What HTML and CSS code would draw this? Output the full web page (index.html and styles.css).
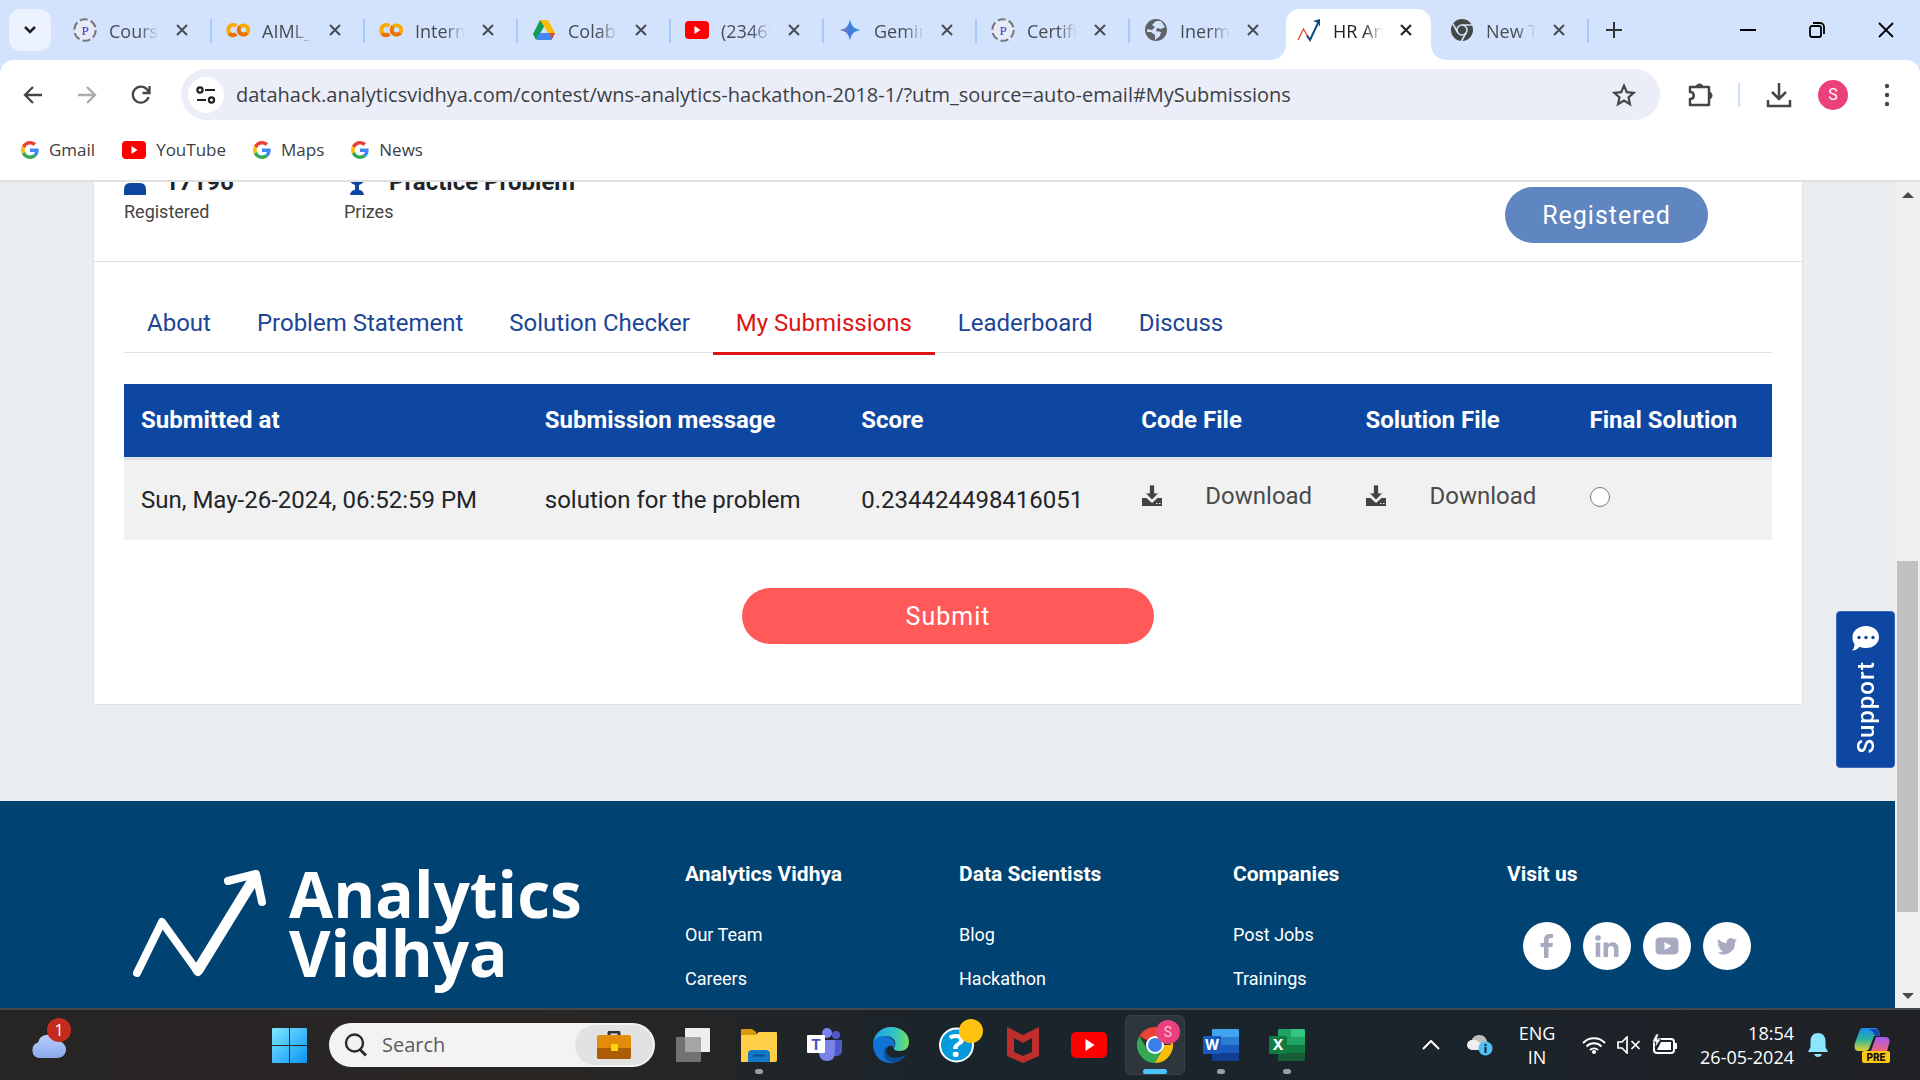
FILE: index.html
```html
<!DOCTYPE html>
<html lang="en">
<head>
<meta charset="utf-8">
<meta name="viewport" content="width=device-width, initial-scale=1">
<title>HR Analytics</title>
<link rel="stylesheet" href="styles.css">
</head>
<body>
<svg class="sprite" aria-hidden="true">
  <symbol id="x" viewBox="0 0 14 14"><path d="M2 2l10 10M12 2L2 12" stroke="currentColor" stroke-width="2" fill="none"/></symbol>
  <symbol id="google" viewBox="0 0 48 48"><path fill="#EA4335" d="M24 9.5c3.54 0 6.71 1.22 9.21 3.6l6.85-6.85C35.9 2.38 30.47 0 24 0 14.62 0 6.51 5.38 2.56 13.22l7.98 6.19C12.43 13.72 17.74 9.5 24 9.5z"/><path fill="#4285F4" d="M46.98 24.55c0-1.57-.15-3.09-.38-4.55H24v9.02h12.94c-.58 2.96-2.26 5.48-4.78 7.18l7.73 6c4.51-4.18 7.09-10.36 7.09-17.65z"/><path fill="#FBBC05" d="M10.53 28.59c-.48-1.45-.76-2.99-.76-4.59s.27-3.14.76-4.59l-7.98-6.19C.92 16.46 0 20.12 0 24c0 3.88.92 7.54 2.56 10.78l7.97-6.19z"/><path fill="#34A853" d="M24 48c6.48 0 11.93-2.13 15.89-5.81l-7.73-6c-2.15 1.45-4.92 2.3-8.16 2.3-6.26 0-11.57-4.22-13.47-9.91l-7.98 6.19C6.51 42.62 14.62 48 24 48z"/></symbol>
  <symbol id="youtube" viewBox="0 0 24 18"><rect y="0" width="24" height="18" rx="4" fill="#f00"/><path d="M9.500 5l6 4-6 4z" fill="#fff"/></symbol>
  <symbol id="colab" viewBox="0 0 24 24"><path d="M10.200 8A5 5 0 1 0 10.200 16" fill="none" stroke="#f9ab00" stroke-width="4"/><circle cx="17.500" cy="12" r="4.700" fill="none" stroke="#f9ab00" stroke-width="3.800"/><path d="M3 15.500a5 5 0 0 0 7.200.5M14 8.500a4.700 4.700 0 0 0 7 6.500" fill="none" stroke="#e8710a" stroke-width="4"/></symbol>
  <symbol id="placement" viewBox="0 0 24 24"><circle cx="12" cy="12" r="10.700" fill="#e8ebf5" stroke="#74797f" stroke-width="2" stroke-dasharray="8 3.200"/><text x="12" y="16.500" text-anchor="middle" font-family="Liberation Serif, serif" font-size="13" fill="#4030d0">P</text></symbol>
  <symbol id="tray" viewBox="0 0 22 22"><path d="M8.500 0h5v8h4L11 15 4.500 8h4z" fill="#444"/><path d="M1 13h4.500l5.500 5 5.500-5H21v8H1z" fill="#444"/><path d="M8.500 0h5v8h4L11 15 4.500 8h4z" fill="#444" stroke="#f1f1f1" stroke-width=".8"/><path d="M15 18.500h1.500M18 18.500h1.500" stroke="#f1f1f1"/></symbol>
</svg>

<header class="browser">
  <div class="tabstrip">
    <button class="tab-search" aria-label="Search tabs"><svg width="14" height="10" viewBox="0 0 14 10"><path d="M2 2l5 5 5-5" fill="none" stroke="#1f1f1f" stroke-width="2.500"/></svg></button>
    <nav class="tabs" aria-label="Open tabs">
      <div class="tab"><svg class="fav"><use href="#placement"/></svg><span class="tab-title">Course</span><button class="close" aria-label="Close"><svg><use href="#x"/></svg></button></div>
      <div class="tab"><svg class="fav"><use href="#colab"/></svg><span class="tab-title">AIML_P</span><button class="close" aria-label="Close"><svg><use href="#x"/></svg></button></div>
      <div class="tab"><svg class="fav"><use href="#colab"/></svg><span class="tab-title">Interns</span><button class="close" aria-label="Close"><svg><use href="#x"/></svg></button></div>
      <div class="tab"><svg class="fav" viewBox="0 0 24 24"><path d="M8 2h8l-8 13.500L4 22l-3-6z" fill="#0f9d58"/><path d="M8 2h8l7 13h-7z" fill="#fbbc04"/><path d="M7 15h16l-3.500 7h-15z" fill="#4285f4"/><path d="M18 15h5l-3.500 7z" fill="#ea4335"/></svg><span class="tab-title">Colab</span><button class="close" aria-label="Close"><svg><use href="#x"/></svg></button></div>
      <div class="tab"><svg class="fav"><use href="#youtube"/></svg><span class="tab-title">(2346)</span><button class="close" aria-label="Close"><svg><use href="#x"/></svg></button></div>
      <div class="tab"><svg class="fav" viewBox="0 0 24 24"><defs><linearGradient id="gem" x2="1"><stop stop-color="#9a7cb8"/><stop offset=".5" stop-color="#3d7bdc"/><stop offset="1" stop-color="#2ba0cf"/></linearGradient></defs><path d="M12 1c1 7 4 10 11 11-7 1-10 4-11 11-1-7-4-10-11-11 7-1 10-4 11-11z" fill="url(#gem)"/></svg><span class="tab-title">Gemini</span><button class="close" aria-label="Close"><svg><use href="#x"/></svg></button></div>
      <div class="tab"><svg class="fav"><use href="#placement"/></svg><span class="tab-title">Certific</span><button class="close" aria-label="Close"><svg><use href="#x"/></svg></button></div>
      <div class="tab last-before"><svg class="fav" viewBox="0 0 24 24"><circle cx="12" cy="12" r="11" fill="#5f6368"/><path d="M12 3l5 0 4 6-4 2-4-1-1 3 5 1-1 4-5 4v-5l-4-3H3c0-1 0-2 .5-3L8 12l3-3-3-2z" fill="#d3e3fd"/></svg><span class="tab-title">Inermo</span><button class="close" aria-label="Close"><svg><use href="#x"/></svg></button></div>
      <div class="tab active"><svg class="fav" viewBox="0 0 24 24"><path d="M1 22L6.500 11l4.500 8" fill="none" stroke="#e8593a" stroke-width="1.500"/><path d="M10 17.500l3 4.500L22 3" fill="none" stroke="#0b4a7c" stroke-width="2"/><path d="M16 3l7-2v8l-2-4z" fill="#0b4a7c"/></svg><span class="tab-title">HR Ana</span><button class="close" aria-label="Close"><svg><use href="#x"/></svg></button></div>
      <div class="tab"><svg class="fav" viewBox="0 0 24 24"><circle cx="12" cy="12" r="11" fill="#444746"/><g fill="none" stroke="#d3e3fd" stroke-width="1.600"><circle cx="12" cy="12" r="5"/><path d="M12 7h10M7.700 14.500L3 6M16.300 14.500L11.500 23"/></g></svg><span class="tab-title">New Ta</span><button class="close" aria-label="Close"><svg><use href="#x"/></svg></button></div>
    </nav>
    <button class="new-tab" aria-label="New tab"><svg width="18" height="18" viewBox="0 0 18 18"><path d="M9 1v16M1 9h16" stroke="#333" stroke-width="2"/></svg></button>
    <div class="window-controls">
      <button aria-label="Minimize"><svg viewBox="0 0 16 16"><path d="M0 8h16" stroke="#000" stroke-width="2"/></svg></button>
      <button aria-label="Restore"><svg viewBox="0 0 16 16"><g fill="none" stroke="#000" stroke-width="1.800"><rect x="1" y="4" width="11" height="11" rx="2"/><path d="M4 1h7a4 4 0 0 1 4 4v7"/></g></svg></button>
      <button aria-label="Close window"><svg viewBox="0 0 16 16"><path d="M1 1l14 14M15 1L1 15" stroke="#000" stroke-width="1.800"/></svg></button>
    </div>
  </div>

  <div class="toolbar">
    <div class="nav-buttons">
      <button aria-label="Back"><svg viewBox="0 0 20 20"><path d="M19 10H2.500M10 2l-8 8 8 8" fill="none" stroke="#444746" stroke-width="2.300"/></svg></button>
      <button aria-label="Forward"><svg viewBox="0 0 20 20"><path d="M1 10h16.500M10 2l8 8-8 8" fill="none" stroke="#aaa" stroke-width="2.300"/></svg></button>
      <button aria-label="Reload"><svg viewBox="0 0 20 20"><path d="M17.500 12A8 8 0 1 1 16 4.500l2 2.500M18.500 1v7h-7" fill="none" stroke="#444746" stroke-width="2.300"/></svg></button>
    </div>
    <div class="omnibox">
      <button class="site-info" aria-label="Site information"><svg width="20" height="18" viewBox="0 0 20 18"><g fill="none" stroke="#1f1f1f" stroke-width="2.200"><circle cx="4" cy="4" r="2.600"/><path d="M9 4h10M1 14h9"/><circle cx="15.500" cy="14" r="2.600"/></g></svg></button>
      <input type="text" aria-label="Address" value="datahack.analyticsvidhya.com/contest/wns-analytics-hackathon-2018-1/?utm_source=auto-email#MySubmissions">
      <button class="star" aria-label="Bookmark"><svg width="24" height="24" viewBox="0 0 24 24"><path d="M12 2.800l2.800 6.300 6.900.7-5.200 4.600 1.500 6.800-6-3.600-6 3.600 1.500-6.800-5.200-4.600 6.900-.7z" fill="none" stroke="#444746" stroke-width="2.200"/></svg></button>
    </div>
    <div class="actions">
      <button aria-label="Extensions"><svg width="26" height="26" viewBox="0 0 26 26"><path d="M2 5h19v18H2v-6c5 0 5-7 0-7z" fill="none" stroke="#444746" stroke-width="2.500" stroke-linejoin="round"/><path d="M8 4a4 4 0 0 1 7 0M22 10a4 4 0 0 1 0 7" fill="#444746" stroke="#444746"/></svg></button>
      <span class="separator"></span>
      <button aria-label="Downloads"><svg width="26" height="26" viewBox="0 0 26 26"><path d="M13 1v15M6 10l7 7 7-7M2 18v6h22v-6" fill="none" stroke="#444746" stroke-width="2.500"/></svg></button>
      <button class="avatar" aria-label="Profile">S</button>
      <button aria-label="Menu"><svg width="6" height="24" viewBox="0 0 6 24"><g fill="#444746"><circle cx="3" cy="3" r="2.200"/><circle cx="3" cy="12" r="2.200"/><circle cx="3" cy="21" r="2.200"/></g></svg></button>
    </div>
  </div>

  <nav class="bookmarks" aria-label="Bookmarks">
    <a href="#"><svg width="18" height="18"><use href="#google"/></svg>Gmail</a>
    <a href="#"><svg width="24" height="18"><use href="#youtube"/></svg>YouTube</a>
    <a href="#"><svg width="18" height="18"><use href="#google"/></svg>Maps</a>
    <a href="#"><svg width="18" height="18"><use href="#google"/></svg>News</a>
  </nav>
</header>

<div class="viewport">
  <div class="site">
    <main class="card">
      <section class="summary">
        <dl class="stat"><dd><svg width="22" height="26" viewBox="0 0 22 26"><circle cx="11" cy="7" r="6" fill="#0d47a1"/><path d="M0 26v-5q0-7 6-7h10q6 0 6 7v5z" fill="#0d47a1"/></svg>17196</dd><dt>Registered</dt></dl>
        <dl class="stat"><dd><svg width="26" height="26" viewBox="0 0 26 26"><path d="M5 0h16v8q0 6-6 8v5q4 0 5 5H6q1-5 5-5v-5q-6-2-6-8z" fill="#0d47a1"/></svg>Practice Problem</dd><dt>Prizes</dt></dl>
        <button class="pill registered">Registered</button>
      </section>
      <section class="content">
        <nav class="page-tabs" aria-label="Contest">
          <a href="#">About</a><a href="#">Problem Statement</a><a href="#">Solution Checker</a><a href="#" class="current">My Submissions</a><a href="#">Leaderboard</a><a href="#">Discuss</a>
        </nav>
        <table class="submissions">
          <thead><tr><th>Submitted at</th><th>Submission message</th><th>Score</th><th>Code File</th><th>Solution File</th><th>Final Solution</th></tr></thead>
          <tbody><tr>
            <td>Sun, May-26-2024, 06:52:59 PM</td><td>solution for the problem</td><td>0.234424498416051</td>
            <td class="file"><a href="#"><svg width="22" height="22"><use href="#tray"/></svg>Download</a></td>
            <td class="file"><a href="#"><svg width="22" height="22"><use href="#tray"/></svg>Download</a></td>
            <td class="file"><input type="radio" name="final" aria-label="Final Solution"></td>
          </tr></tbody>
        </table>
        <button class="pill submit">Submit</button>
      </section>
    </main>
    <footer class="footer">
      <a class="brand" href="#">
        <svg width="134" height="108" viewBox="0 0 134 108"><g fill="none" stroke="#fff" stroke-linecap="round" stroke-linejoin="round"><path d="M4 104L29 53l36 50" stroke-width="8"/><path d="M65 101L122 8" stroke-width="11"/><path d="M95 12l28-7 6 28" stroke-width="8"/></g></svg>
        <span>Analytics<br>Vidhya</span>
      </a>
      <div class="links"><h3>Analytics Vidhya</h3><a href="#">Our Team</a><a href="#">Careers</a></div>
      <div class="links"><h3>Data Scientists</h3><a href="#">Blog</a><a href="#">Hackathon</a></div>
      <div class="links"><h3>Companies</h3><a href="#">Post Jobs</a><a href="#">Trainings</a></div>
      <div class="links"><h3>Visit us</h3>
        <div class="social">
          <a href="#" aria-label="Facebook"><svg viewBox="0 0 24 24"><path d="M9 24V13H5.500V9H9V6c0-4 2-6 5.500-6H18v4h-2.500C14 4 13.500 4.800 13.500 6v3H18l-.6 4h-3.900v11z"/></svg></a>
          <a href="#" aria-label="LinkedIn"><svg viewBox="0 0 24 24"><circle cx="3" cy="4" r="2.800"/><path d="M.7 8.500h4.600V23H.7zM8.500 8.500H13v2c2.500-4 10.500-3 10.500 4V23H19v-8c0-4-6-4-6 0v8H8.500z"/></svg></a>
          <a href="#" aria-label="YouTube"><svg viewBox="0 0 24 24"><path fill-rule="evenodd" d="M5 3.500h14q4.500 0 4.500 5v7q0 5-4.500 5H5q-4.500 0-4.500-5v-7q0-5 4.500-5zM9.500 8v8l7-4z"/></svg></a>
          <a href="#" aria-label="Twitter"><svg viewBox="0 0 24 24"><path d="M22 6c-.8.400-1.500.6-2.400.7.900-.5 1.500-1.300 1.800-2.300-.8.500-1.700.8-2.600 1a4.100 4.100 0 0 0-7 3.700C8.400 9 5.400 7.400 3.400 4.900a4.100 4.100 0 0 0 1.300 5.500c-.7 0-1.300-.2-1.900-.5 0 2 1.400 3.700 3.300 4.100-.6.200-1.200.2-1.800.1.500 1.600 2 2.800 3.800 2.800A8.200 8.200 0 0 1 2 18.600 11.600 11.600 0 0 0 20 8.300c.800-.6 1.500-1.300 2-2.300z"/></svg></a>
        </div>
      </div>
    </footer>
  </div>
  <button class="support"><svg width="28" height="25" viewBox="0 0 28 25"><path d="M14 0c8 0 13 5 13 11s-5 11-13 11c-2.500 0-4.500-.4-6.500-1.200C6 23 3.500 24.500 0 24.500c2-2 2.500-4 2.500-6.500C1 16 .5 14 .5 11 .5 5 6 0 14 0z" fill="#fff"/><g fill="#0d47a1"><circle cx="7" cy="11.500" r="1.700"/><circle cx="14" cy="11.500" r="1.700"/><circle cx="21" cy="11.500" r="1.700"/></g></svg><span>Support</span></button>
  <div class="scrollbar" aria-hidden="true">
    <svg width="12" height="6" viewBox="0 0 12 6"><path d="M0 6l6-6 6 6z" fill="#4a4a4a"/></svg>
    <span class="track"><span class="thumb"></span></span>
    <svg width="12" height="6" viewBox="0 0 12 6"><path d="M0 0l6 6 6-6z" fill="#4a4a4a"/></svg>
  </div>
</div>

<footer class="taskbar">
  <button class="weather" aria-label="Weather"><svg width="36" height="26" viewBox="0 0 36 26"><defs><linearGradient id="cl" y2="1" x2="0"><stop stop-color="#b9cffc"/><stop offset="1" stop-color="#8ba9ea"/></linearGradient></defs><path d="M9 26a8 8 0 0 1-1-15.500A10 10 0 0 1 27 9a8.500 8.500 0 0 1 1 17z" fill="url(#cl)"/></svg><span class="count">1</span></button>
  <button class="start" aria-label="Start"><svg width="35" height="35" viewBox="0 0 35 35"><defs><linearGradient id="win" x2="1" y2="1"><stop stop-color="#7de8ff"/><stop offset="1" stop-color="#0a93f5"/></linearGradient></defs><path d="M0 1q0-1 1-1h16v17H0zM18 0h16q1 0 1 1v16H18zM0 18h17v17H1q-1 0-1-1zM18 18h17v16q0 1-1 1H18z" fill="url(#win)"/></svg></button>
  <div class="search">
    <svg width="24" height="24" viewBox="0 0 24 24"><g fill="none" stroke="#2b2b2b" stroke-width="2.400"><circle cx="10.500" cy="10" r="8.500"/><path d="M16 16.500l6 6" stroke-width="3"/></g></svg>
    <input type="text" placeholder="Search" aria-label="Search">
    <span class="case"><svg width="34" height="28" viewBox="0 0 34 28"><path d="M12 5V2q0-1 1-1h8q1 0 1 1v3" fill="none" stroke="#333" stroke-width="3"/><rect y="4" width="34" height="24" rx="2" fill="#e28c09"/><path d="M0 17h34v9q0 2-2 2H2q-2 0-2-2z" fill="#ab5c05"/><rect x="14" y="13" width="7" height="7" fill="#ffd40a"/></svg></span>
  </div>
  <div class="apps">
    <button aria-label="Task view"><svg viewBox="0 0 36 36"><rect x="10" y="1" width="25" height="24" rx="1" fill="#eee"/><rect x="1" y="10" width="25" height="25" rx="1" fill="#8c8c8c" opacity=".75"/></svg></button>
    <button class="open" aria-label="File Explorer"><svg viewBox="0 0 36 36"><path d="M0 3q0-1 1-1h10l4 3v6H0z" fill="#d99b0b"/><path d="M0 8h14l4-3h17q1 0 1 1v27q0 2-2 2H0z" fill="#ffcf48"/><path d="M7 35v-8q0-4 4-4h14q4 0 4 4v8z" fill="#1278c8"/><path d="M12 28.500h12" stroke="#0a4e8c" stroke-width="2"/></svg></button>
    <button aria-label="Teams"><svg viewBox="0 0 36 36"><circle cx="29" cy="8" r="4" fill="#5059c9"/><path d="M23 13h12v10q0 6-6 6h-6z" fill="#5059c9"/><circle cx="20" cy="6" r="5" fill="#7b83eb"/><path d="M12 13h16v12q0 9-8 9-7 0-8-8z" fill="#7b83eb"/><rect y="8" width="18" height="18" rx="1" fill="#fff"/><text x="9" y="23" text-anchor="middle" font-family="Inter, sans-serif" font-size="15" font-weight="700" fill="#4b53bc">T</text></svg></button>
    <button aria-label="Edge"><svg viewBox="0 0 36 36"><defs><linearGradient id="ed" x2="1"><stop stop-color="#1aa0e0"/><stop offset=".6" stop-color="#35c4c8"/><stop offset="1" stop-color="#70e05a"/></linearGradient></defs><path d="M0 17C1 6 9 0 18 0c11 0 18 7 18 15 0 6-4 9-9 9-4 0-7-1-6-3 4-6-1-12-8-12C7 9 2 12 0 17z" fill="url(#ed)"/><path d="M0 17c1-5 6-8 11-8 8 0 13 6 10 12-2-4-8-2-8 3 0 6 8 10 19 5-4 5-9 7-14 7C7 36 0 28 0 17z" fill="#1173d4"/><path d="M13 24c1 7 10 9 20 4-4 6-10 8-15 7-6-1-10-8-5-16z" fill="#0c4d94"/></svg></button>
    <button class="badged" aria-label="Help"><svg viewBox="0 0 36 36"><circle cx="17.500" cy="18" r="16.500" fill="#0699dc" stroke="#fff" stroke-width="2"/><text x="17.500" y="30" text-anchor="middle" font-family="Open Sans, sans-serif" font-size="33" font-weight="700" fill="#fff">?</text></svg><span class="badge yellow"></span></button>
    <button aria-label="McAfee"><svg viewBox="0 0 36 36"><path d="M2 0l16 8L34 0v29l-16 7-16-7zM9 11v14l9 4 9-4V11l-9 5z" fill="#c02d2d" fill-rule="evenodd"/></svg></button>
    <button aria-label="YouTube"><svg viewBox="0 0 36 36"><rect y="5" width="36" height="26" rx="5" fill="#f00"/><path d="M14.500 12l9 6-9 6z" fill="#fff"/></svg></button>
    <button class="badged focused" aria-label="Chrome"><svg viewBox="0 0 36 36"><path d="M18 18L2.400 9A18 18 0 0 1 33.600 9z" fill="#ea4335"/><path d="M18 18h15.600a18 18 0 0 0 0-9H18zM18 18l15.600-9A18 18 0 0 1 18 36z" fill="#fbbc05"/><path d="M18 18l7.800 4.500L18 36A18 18 0 0 1 2.400 9l7.800 13.500z" fill="#34a853"/><circle cx="18" cy="18" r="9" fill="#fff"/><circle cx="18" cy="18" r="7" fill="#3b7ded"/></svg><span class="badge pink">S</span></button>
    <button class="open" aria-label="Word"><svg viewBox="0 0 36 36"><path d="M9 3q0-1 1-1h25q1 0 1 1v7H9z" fill="#41a5ee"/><path d="M9 10h27v8H9z" fill="#2b7cd3"/><path d="M9 18h27v8H9z" fill="#185abd"/><path d="M9 26h27v7q0 1-1 1H10q-1 0-1-1z" fill="#103f91"/><rect y="9" width="18" height="18" rx="1" fill="#185abd"/><text x="9" y="23" text-anchor="middle" font-family="Inter, sans-serif" font-size="14" font-weight="700" fill="#fff">W</text></svg></button>
    <button class="open" aria-label="Excel"><svg viewBox="0 0 36 36"><path d="M9 3q0-1 1-1h12v32H10q-1 0-1-1z" fill="#21a366"/><path d="M22 2h13q1 0 1 1v7H22z" fill="#33c481"/><path d="M22 10h14v8H22z" fill="#21a366"/><path d="M9 18h27v8H9z" fill="#107c41"/><path d="M9 26h27v7q0 1-1 1H10q-1 0-1-1z" fill="#185c37"/><rect y="9" width="18" height="18" rx="1" fill="#107c41"/><text x="9" y="23" text-anchor="middle" font-family="Inter, sans-serif" font-size="15" font-weight="700" fill="#fff">X</text></svg></button>
  </div>
  <div class="system">
    <button aria-label="Hidden icons"><svg width="18" height="10" viewBox="0 0 18 10"><path d="M1 9l8-8 8 8" fill="none" stroke="#fff" stroke-width="2"/></svg></button>
    <button class="onedrive" aria-label="OneDrive"><svg width="26" height="22" viewBox="0 0 26 22"><path d="M5 16a5 5 0 0 1-1-9Q7 0 13 1q5 0 7 6l4 9z" fill="#bdbdbd"/><path d="M5 16a5 5 0 0 1 0-10q6-1 9 5l-2 5z" fill="#eee"/><circle cx="18.500" cy="14.500" r="7" fill="#50c0f5"/><path d="M18.500 13v6M18.500 10v2" stroke="#123" stroke-width="2"/></svg></button>
    <button class="lang"><span>ENG</span><span>IN</span></button>
    <div class="status">
      <svg width="24" height="18" viewBox="0 0 24 18"><g fill="none" stroke="#fff" stroke-width="2"><path d="M1 7a15 15 0 0 1 22 0M4.500 10.500a10.500 10.500 0 0 1 15 0M8 14a6 6 0 0 1 8 0"/></g><circle cx="12" cy="16" r="2" fill="#fff"/></svg>
      <svg width="24" height="18" viewBox="0 0 24 18"><g fill="none" stroke="#fff" stroke-width="1.700"><path d="M1 6h4l5-5v16l-5-5H1zM14.500 5l8 8M22.500 5l-8 8"/></g></svg>
      <svg width="26" height="22" viewBox="0 0 26 22"><rect x="2" y="5" width="20" height="14" rx="3" fill="none" stroke="#fff" stroke-width="2"/><path d="M5 16l4-8h10v8H5zM23 9h2v6h-2z" fill="#fff"/><path d="M4 0L0 8h4l-1 6 6-9H5l2-5z" fill="#fff" stroke="#1c2126" stroke-width=".7"/></svg>
    </div>
    <button class="clock"><span>18:54</span><span>26-05-2024</span></button>
    <button class="bell" aria-label="Notifications"><svg width="20" height="24" viewBox="0 0 20 24"><path d="M10 0q7 0 7.500 8v6L20 19H0l2.500-5V8Q3 0 10 0zM6 21h8q-1 3-4 3t-4-3z" fill="#8be6ff"/></svg></button>
    <button class="copilot" aria-label="Copilot"><svg width="36" height="36" viewBox="0 0 36 36"><defs><linearGradient id="c1" x2="0" y2="1"><stop stop-color="#1b8cf0"/><stop offset=".5" stop-color="#2bb59a"/><stop offset="1" stop-color="#e8d22a"/></linearGradient><linearGradient id="c2" x2="0" y2="1"><stop stop-color="#a35bf0"/><stop offset="1" stop-color="#f2667c"/></linearGradient></defs><path d="M9 1h12q4 0 5 8h-6l-5 13q-1 2-4 2H5q-6 0-4-8L5 5q1-4 4-4z" fill="url(#c1)"/><path d="M14 2h8q3 1 4 7h-5q-2-6-7-7z" fill="#1748b8"/><path d="M22 10h9q6 0 4 7l-2 7H17z" fill="url(#c2)"/><rect x="8" y="24" width="28" height="12" rx="2" fill="#fcc813"/><text x="22" y="34" text-anchor="middle" font-family="Inter, sans-serif" font-size="10" font-weight="800" fill="#111">PRE</text></svg></button>
  </div>
</footer>
</body>
</html>
```
FILE: styles.css
```css
* { box-sizing: border-box; }
body {
  margin: 0;
  height: 100vh;
  display: flex;
  flex-direction: column;
  overflow: hidden;
  font-family: Roboto, "Liberation Sans", sans-serif;
  color: #212529;
}
button {
  border: 0;
  padding: 0;
  background: none;
  font: inherit;
  color: inherit;
  display: flex;
  align-items: center;
  justify-content: center;
  flex: none;
}
a { color: inherit; text-decoration: none; }
svg { flex: none; display: block; }
.sprite { position: absolute; width: 0; height: 0; }

/* Browser chrome */
.browser {
  flex: none;
  background: #d3e3fd;
  border-bottom: 2px solid #e0e0e0;
  font-family: "Open Sans", "Noto Sans", sans-serif;
}
.tabstrip { display: flex; align-items: center; height: 60px; padding-left: 9px; }
.tab-search { width: 42px; height: 42px; border-radius: 12px; background: #edf3fe; }
.tabs { display: flex; align-self: stretch; margin-left: 8px; }
.tab {
  position: relative;
  width: 153px;
  display: flex;
  align-items: center;
  padding-left: 14px;
  color: #474b52;
  font-size: 18px;
}
.tab::after {
  content: "";
  position: absolute;
  right: 0;
  top: 19px;
  width: 2px;
  height: 24px;
  background: #a8c7fa;
}
.tab.last-before::after { display: none; }
.fav { width: 24px; height: 24px; }
.tab-title {
  width: 50px;
  margin-left: 12px;
  padding-top: 2px;
  overflow: hidden;
  white-space: nowrap;
  -webkit-mask-image: linear-gradient(90deg, #000 60%, transparent);
  mask-image: linear-gradient(90deg, #000 60%, transparent);
}
.close { width: 24px; height: 24px; margin-left: 11px; }
.close svg { width: 14px; height: 14px; }
.tab.active { color: #1f1f1f; z-index: 1; }
.tab.active::before {
  content: "";
  position: absolute;
  inset: 9px 5px 0 3px;
  border-radius: 14px 14px 0 0;
  background: #fff;
  z-index: -1;
}
.tab.active::after {
  top: auto;
  bottom: 0;
  right: -9px;
  width: 173px;
  height: 14px;
  background:
    radial-gradient(circle at 0 0, transparent 13px, #fff 14px) 0 0 / 14px 14px no-repeat,
    radial-gradient(circle at 100% 0, transparent 13px, #fff 14px) 100% 0 / 14px 14px no-repeat;
  z-index: -1;
}
.new-tab { width: 30px; height: 30px; margin-left: 10px; }
.window-controls { display: flex; margin-left: auto; }
.window-controls button { width: 69px; height: 60px; }
.window-controls svg { width: 16px; height: 16px; }

.toolbar {
  display: flex;
  align-items: center;
  height: 69px;
  background: #fff;
  border-radius: 14px 14px 0 0;
  padding: 0 6px;
}
.nav-buttons { display: flex; width: 175px; }
.nav-buttons button { width: 54px; height: 40px; }
.nav-buttons svg { width: 20px; height: 20px; }
.omnibox {
  flex: 1;
  display: flex;
  align-items: center;
  height: 51px;
  border-radius: 26px;
  background: #ebeef8;
  padding: 0 24px 0 7px;
}
.site-info { width: 36px; height: 36px; border-radius: 50%; background: #fff; }
.omnibox input {
  flex: 1;
  min-width: 0;
  border: 0;
  outline: 0;
  padding: 0;
  margin-left: 12px;
  background: none;
  font: 20px/28px "Open Sans", "Noto Sans", sans-serif;
  color: #3c4043;
}
.actions { display: flex; align-items: center; padding-left: 14px; }
.actions button { width: 54px; height: 40px; }
.separator { width: 2px; height: 24px; margin: 0 12px 0 10px; background: #cfe0fc; }
.actions .avatar {
  width: 30px;
  height: 30px;
  margin: 0 12px;
  border-radius: 50%;
  background: #ec407a;
  color: #fff;
  font: 16px/30px Roboto, sans-serif;
}
.bookmarks {
  display: flex;
  align-items: center;
  gap: 27px;
  height: 51px;
  padding: 0 21px 10px;
  background: #fff;
  color: #3c4043;
  font-size: 17px;
}
.bookmarks a { display: flex; align-items: center; gap: 10px; }

/* Page inside the window */
.viewport {
  position: relative;
  flex: 1;
  min-height: 0;
  display: flex;
  overflow: hidden;
  background: #eaeef1;
}
.site { flex: 1; min-width: 0; display: flex; flex-direction: column; }
.card {
  flex: none;
  margin: -32px 92px 0 93px;
  background: #fff;
  border: 1px solid #dee2e6;
  border-radius: 0 0 2px 2px;
}
.summary {
  display: flex;
  align-items: flex-start;
  padding: 15px 94px 18px 30px;
  border-bottom: 1px solid #dcdcdc;
}
.stat { width: 220px; margin: 0; display: flex; flex-direction: column; font-size: 18px; line-height: 28px; color: #444; }
.stat dd { margin: 0; display: flex; align-items: center; gap: 19px; font-size: 24px; font-weight: 700; line-height: 32px; color: #212529; white-space: nowrap; }
.pill {
  height: 56px;
  border-radius: 28px;
  color: #fff;
  font-size: 25px;
  letter-spacing: 1px;
}
.registered { width: 203px; margin: 21px 0 0 auto; background: #6086c1; }
.content { padding: 32px 30px 60px; }
.page-tabs { display: flex; border-bottom: 1px solid #dcdfe3; }
.page-tabs a { padding: 12px 23px; margin-bottom: -3px; border-bottom: 3px solid transparent; font-size: 24px; line-height: 34px; color: #1c4595; }
.page-tabs .current { color: #dc1414; border-color: #dc1414; }
.submissions { width: 100%; margin: 31px 0 48px; border-collapse: collapse; table-layout: fixed; text-align: left; font-size: 24px; line-height: 34px; }
.submissions th { height: 74px; padding: 0 17px; background: #0d47a1; color: #fff; font-weight: 700; border-bottom: 3px solid #dfe3e9; white-space: nowrap; }
.submissions td { height: 82px; padding: 0 17px; background: #f1f1f1; white-space: nowrap; }
.submissions th:nth-child(1) { width: 24.500%; }
.submissions th:nth-child(2) { width: 19.200%; }
.submissions th:nth-child(3) { width: 17%; }
.submissions th:nth-child(4), .submissions th:nth-child(5) { width: 13.600%; }
.submissions .file { color: #4a4a4a; padding-bottom: 7px; }
.submissions .file a { display: flex; align-items: center; gap: 42px; }
.submissions input { display: block; width: 20px; height: 20px; margin: 2px 0 0; }
.submit { width: 412px; margin: 0 auto; background: #ff5959; }

.footer {
  flex: 1 0 auto;
  display: grid;
  grid-template-columns: minmax(0, 552px) repeat(4, minmax(0, 274px));
  margin-top: 96px;
  padding: 60px 0 0 133px;
  background: #004272;
  color: #fff;
}
.brand { display: flex; align-items: flex-start; gap: 22px; font: 700 64px/59px "Open Sans", sans-serif; }
.brand svg { margin-top: 8px; }
.brand span { padding-top: 3px; }
.links { display: flex; flex-direction: column; font-size: 18px; line-height: 44px; }
.links h3 { margin: 0 0 26px; font-size: 21px; line-height: 26px; font-weight: 700; }
.links a { color: #fff; }
.social { display: flex; gap: 12px; padding: 9px 0 0 16px; }
.social a { display: flex; align-items: center; justify-content: center; width: 48px; height: 48px; border-radius: 50%; background: #fff; }
.social svg { width: 24px; height: 24px; fill: #a7aac1; }

.support {
  position: absolute;
  right: 25px;
  top: 429px;
  width: 59px;
  height: 157px;
  flex-direction: column;
  gap: 10px;
  border: 1px solid #3d68b4;
  border-radius: 4px;
  background: #0d47a1;
  color: #fff;
  font-size: 24px;
  font-weight: 500;
  letter-spacing: 1px;
}
.support span { writing-mode: vertical-rl; transform: rotate(180deg); }
.scrollbar { flex: none; width: 25px; display: flex; flex-direction: column; align-items: center; padding: 10px 0 9px; background: #f0f0f0; }
.track { flex: 1; display: flex; flex-direction: column; align-items: center; padding: 363px 0 81px; }
.thumb { flex: 1; width: 21px; background: #c1c1c1; }

/* Taskbar */
.taskbar {
  flex: none;
  display: flex;
  align-items: center;
  height: 72px;
  padding: 0 30px;
  border-top: 2px solid #44484b;
  background: linear-gradient(90deg, #272524 0, #292624 30%, #1a242b 50%, #1b242b 75%, #202124 100%);
  color: #fff;
  font: 18px/24px "Open Sans", "Noto Sans", sans-serif;
}
.weather { position: relative; }
.count { position: absolute; left: 17px; top: -14px; width: 24px; height: 24px; border-radius: 50%; background: #c42b1c; font-size: 16px; line-height: 24px; }
.start { margin-left: 206px; }
.search { display: flex; align-items: center; width: 326px; height: 44px; margin-left: 22px; padding: 2px 2px 2px 15px; border-radius: 22px; background: #f3f3f3; }
.search input { flex: 1; min-width: 0; border: 0; padding: 0; margin-left: 14px; outline: 0; background: none; font: 20px/28px "Open Sans", sans-serif; }
.search input::placeholder { color: #5c5c5c; opacity: 1; }
.case { display: flex; align-items: center; justify-content: center; width: 78px; height: 40px; border-radius: 20px; background: #e2e2e2; }
.apps { display: flex; gap: 6px; margin-left: 8px; }
.apps button { position: relative; width: 60px; height: 60px; border-radius: 6px; }
.apps svg { width: 36px; height: 36px; }
.apps .focused { background: #2d363d; border: 1px solid #3a4248; }
.open::after, .focused::after { content: ""; position: absolute; left: 26px; bottom: 1px; width: 8px; height: 5px; border-radius: 3px; background: #9a9fa3; }
.focused::after { left: 17px; bottom: 0; width: 24px; background: #4cc2ff; }
.badge { position: absolute; right: 4px; top: 4px; width: 24px; height: 24px; border-radius: 50%; font: 14px/24px Roboto, sans-serif; }
.yellow { background: #ffc20e; }
.pink { background: #ec407a; color: #fbd; }
.system { display: flex; align-items: center; margin-left: auto; }
.onedrive { margin-left: 27px; }
.lang { flex-direction: column; width: 40px; margin-left: 24px; }
.status { display: flex; align-items: center; gap: 11px; margin-left: 25px; }
.clock { flex-direction: column; align-items: flex-end; width: 100px; margin-left: 16px; }
.bell { margin-left: 14px; }
.copilot { margin-left: 26px; }
```
